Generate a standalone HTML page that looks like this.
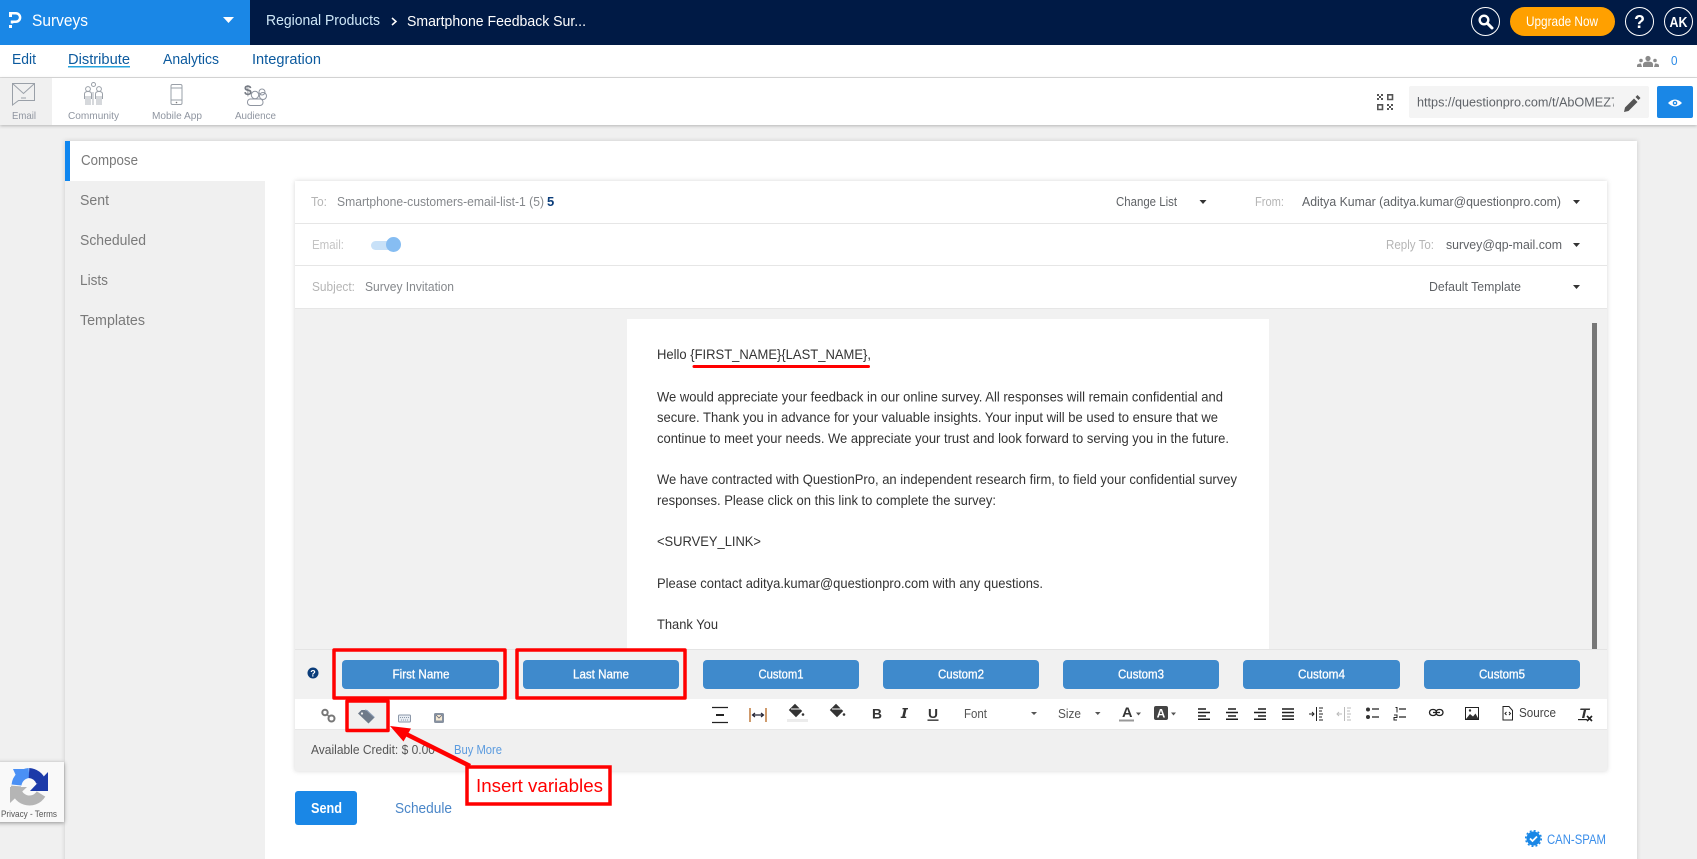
<!DOCTYPE html>
<html lang="en"><head><meta charset="utf-8"><title>Surveys - Distribute</title>
<style>
html,body{margin:0;padding:0;background:#f0f0f0;width:1697px;height:859px;overflow:hidden}
svg{display:block}
text{font-family:"Liberation Sans",Arial,sans-serif}
.w{fill:#fff}
.nav{font-size:15px;fill:#0c5a9e}
.lab{font-size:10.5px;fill:#8f95a0}
.side{font-size:14.5px;fill:#7a7a7a}
.g{font-size:13px;fill:#b5b5b5}
.d{font-size:13px;fill:#5f6266}
.l{font-size:13px;fill:#85888c}
.m{font-size:14px;fill:#333}
.b{font-size:13px;fill:#fff;stroke:#fff;stroke-width:.3px;text-anchor:middle}
</style></head><body>
<svg xmlns="http://www.w3.org/2000/svg" width="1697" height="859" viewBox="0 0 1697 859">
<defs>
<filter id="s1" x="-5%" y="-5%" width="110%" height="110%"><feDropShadow dx="0" dy="0" stdDeviation="2.5" flood-color="#000" flood-opacity=".16"/></filter>
<filter id="s2" x="-20%" y="-20%" width="140%" height="140%"><feDropShadow dx="0" dy="1" stdDeviation="2" flood-color="#000" flood-opacity=".4"/></filter>
<filter id="s3" x="-5%" y="-50%" width="110%" height="200%"><feDropShadow dx="0" dy="1" stdDeviation="1.5" flood-color="#000" flood-opacity=".25"/></filter>
</defs>
<rect width="1697" height="859" fill="#f0f0f0"/>

<!-- top bar -->
<rect width="1697" height="45" fill="#001a45"/>
<rect width="250" height="45" fill="#1a87e6"/>
<path d="M9 13.200h6.800a4.300 4.300 0 0 1 0 8.600h-3.800v1.700" fill="none" stroke="#fff" stroke-width="2.500"/>
<rect x="9" y="12" width="3" height="5" fill="#fff"/>
<rect x="9" y="25" width="3" height="3" fill="#fff"/>
<text x="32" y="26" font-size="17" class="w" textLength="56" lengthAdjust="spacingAndGlyphs">Surveys</text>
<path d="M223 17h11l-5.500 6z" fill="#fff"/>
<text x="266" y="25" font-size="15" fill="#cfe8f8" textLength="114" lengthAdjust="spacingAndGlyphs">Regional Products</text>
<path d="M392 18l4 3.500-4 3.500" fill="none" stroke="#fff" stroke-width="1.500"/>
<text x="407" y="26" font-size="15" class="w" textLength="179" lengthAdjust="spacingAndGlyphs">Smartphone Feedback Sur...</text>
<circle cx="1485.500" cy="21.500" r="14" fill="none" stroke="#fff" stroke-width="1"/>
<circle cx="1484" cy="20" r="4.300" fill="none" stroke="#fff" stroke-width="2.400"/>
<path d="M1487.500 23.500l4.500 4.500" stroke="#fff" stroke-width="3" stroke-linecap="round"/>
<rect x="1510" y="7" width="105" height="29" rx="14.500" fill="#ffa000"/>
<text x="1526" y="26" font-size="14" class="w" textLength="72" lengthAdjust="spacingAndGlyphs">Upgrade Now</text>
<circle cx="1639.500" cy="21.500" r="14" fill="none" stroke="#fff" stroke-width="1"/>
<text x="1639.500" y="28" font-size="18" font-weight="bold" class="w" text-anchor="middle">?</text>
<circle cx="1678.500" cy="21.500" r="14" fill="none" stroke="#fff" stroke-width="1"/>
<text x="1678.500" y="27" font-size="15" font-weight="bold" class="w" text-anchor="middle" textLength="18" lengthAdjust="spacingAndGlyphs">AK</text>

<!-- nav -->
<rect y="45" width="1697" height="32" fill="#fff"/>
<rect y="77" width="1697" height="1" fill="#dcdcdc"/>
<text x="12" y="64" class="nav" textLength="24" lengthAdjust="spacingAndGlyphs">Edit</text>
<text x="68" y="64" class="nav" textLength="62" lengthAdjust="spacingAndGlyphs">Distribute</text>
<rect x="68" y="66" width="62" height="1.500" fill="#27a3dd"/>
<text x="163" y="64" class="nav" textLength="56" lengthAdjust="spacingAndGlyphs">Analytics</text>
<text x="252" y="64" class="nav" textLength="69" lengthAdjust="spacingAndGlyphs">Integration</text>
<g fill="#8a8a8a"><circle cx="1648" cy="58.500" r="2.600"/><circle cx="1641" cy="60.500" r="1.800"/><circle cx="1655" cy="60.500" r="1.800"/><path d="M1643 67v-2.500q0-3 5-3t5 3v2.500z"/><path d="M1637 67v-1.500q0-2 4-2l1 3.500zM1659 67v-1.500q0-2-4-2l-1 3.500z"/></g>
<text x="1671" y="65" font-size="13" fill="#2a8ae6" textLength="6.500" lengthAdjust="spacingAndGlyphs">0</text>

<!-- subbar -->
<rect y="78" width="1697" height="47" fill="#fff" filter="url(#s3)"/>
<rect y="78" width="52" height="47" fill="#f0f0f0"/>
<path d="M12.500 83.500h22v17h-16l-6 4.500zM12.500 83.500l11 10 11-10" fill="none" stroke="#9aa0a8" stroke-width="1"/>
<path d="M21 98h5" stroke="#9aa0a8"/>
<text x="12" y="119" class="lab" textLength="24" lengthAdjust="spacingAndGlyphs">Email</text>
<g fill="none" stroke="#9aa0a8" stroke-width="1"><circle cx="93.500" cy="84.500" r="2"/><circle cx="88" cy="89" r="2.400"/><circle cx="99" cy="89" r="2.400"/><path d="M84.500 99v-5q0-2.500 3.500-2.500t3.500 2.500v5M95.500 99v-5q0-2.500 3.500-2.500t3.500 2.500v5"/><path d="M86 96v9M88 96v9M90 96v9M97 96v9M99 96v9M101 96v9M93 92v13" stroke-width=".8"/></g>
<text x="68" y="119" class="lab" textLength="51" lengthAdjust="spacingAndGlyphs">Community</text>
<rect x="171" y="84.500" width="11" height="20" rx="1.500" fill="none" stroke="#9aa0a8"/><path d="M171 88h11M171 100h11" stroke="#9aa0a8"/><circle cx="176.500" cy="102.500" r=".8" fill="#777"/>
<text x="152" y="119" class="lab" textLength="50" lengthAdjust="spacingAndGlyphs">Mobile App</text>
<text x="244" y="95" font-size="14" font-weight="bold" fill="#767b84">$</text>
<g fill="none" stroke="#8f95a0"><circle cx="255" cy="95" r="3.700"/><circle cx="262" cy="92" r="3"/><circle cx="263" cy="96" r="3.500"/><rect x="247.500" y="99" width="15.500" height="6.500" rx="3"/></g>
<text x="235" y="119" class="lab" textLength="41" lengthAdjust="spacingAndGlyphs">Audience</text>
<g fill="#555">
<path d="M1387.800 94.800h4.700v4.700h-4.700zM1377.800 104.800h4.700v4.700h-4.700z" fill="none" stroke="#555" stroke-width="1.600"/>
<path d="M1377 94h2v2h-2zM1381 94h2v2h-2zM1379 96h2v2h-2zM1377 98h2v2h-2zM1381 98h2v2h-2zM1387 104h2v2h-2zM1391 104h2v2h-2zM1389 106h2v2h-2zM1387 108h2v2h-2zM1391 108h2v2h-2z"/>
</g>
<rect x="1409" y="86" width="240" height="32" rx="2" fill="#f4f4f4"/>
<text x="1417" y="106.500" font-size="13" fill="#5f6368" textLength="201" lengthAdjust="spacingAndGlyphs">https://questionpro.com/t/AbOMEZ7</text>
<rect x="1614" y="90" width="10" height="24" fill="#f4f4f4"/>
<path d="M1625 107.500l9-9 3.500 3.500-9 9-4.500 1zM1635.500 97l2-2 3 3-2 2z" fill="#555"/>
<rect x="1657" y="86" width="36" height="32" rx="2" fill="#1a87e6"/>
<path d="M1668 103q7-7 14 0q-7 7-14 0z" fill="#fff"/><circle cx="1675" cy="103" r="2.300" fill="#1a87e6"/><circle cx="1675" cy="103" r="1" fill="#fff"/>

<!-- panel -->
<rect x="65" y="141" width="1572" height="730" fill="#fff" filter="url(#s1)"/>
<rect x="65" y="181" width="200" height="678" fill="#f0f0f0"/>
<rect x="65" y="141" width="5" height="40" fill="#0f86ef"/>
<text x="81" y="165" class="side" textLength="57" lengthAdjust="spacingAndGlyphs">Compose</text>
<text x="80" y="205" class="side" textLength="29" lengthAdjust="spacingAndGlyphs">Sent</text>
<text x="80" y="245" class="side" textLength="66" lengthAdjust="spacingAndGlyphs">Scheduled</text>
<text x="80" y="285" class="side" textLength="28" lengthAdjust="spacingAndGlyphs">Lists</text>
<text x="80" y="325" class="side" textLength="65" lengthAdjust="spacingAndGlyphs">Templates</text>

<!-- card -->
<rect x="295" y="181" width="1312" height="590" fill="#fff" filter="url(#s1)"/>
<rect x="295" y="223" width="1312" height="1" fill="#e6e6e6"/>
<rect x="295" y="265" width="1312" height="1" fill="#e6e6e6"/>
<rect x="295" y="308" width="1312" height="1" fill="#e6e6e6"/>
<text x="311" y="206" class="g" textLength="16" lengthAdjust="spacingAndGlyphs">To:</text>
<text x="337" y="206" class="l" textLength="207" lengthAdjust="spacingAndGlyphs">Smartphone-customers-email-list-1 (5)</text>
<text x="547" y="206" font-size="13" font-weight="bold" fill="#0b3d7a">5</text>
<text x="1116" y="206" class="d" textLength="61" lengthAdjust="spacingAndGlyphs">Change List</text>
<path d="M1199.500 200h7l-3.500 4z" fill="#333"/>
<text x="1255" y="206" class="g" textLength="29" lengthAdjust="spacingAndGlyphs">From:</text>
<text x="1302" y="206" class="d" textLength="259" lengthAdjust="spacingAndGlyphs">Aditya Kumar (aditya.kumar@questionpro.com)</text>
<path d="M1573 200h7l-3.500 4z" fill="#333"/>
<text x="312" y="249" class="g" style="fill:#c4c4c4" textLength="32" lengthAdjust="spacingAndGlyphs">Email:</text>
<rect x="371" y="241" width="26" height="9" rx="4.500" fill="#c8e1f8"/>
<circle cx="393.500" cy="244.500" r="7.500" fill="#86bdf2"/>
<text x="1386" y="249" class="g" textLength="48" lengthAdjust="spacingAndGlyphs">Reply To:</text>
<text x="1446" y="249" class="d" textLength="116" lengthAdjust="spacingAndGlyphs">survey@qp-mail.com</text>
<path d="M1573 243h7l-3.500 4z" fill="#333"/>
<text x="312" y="291" class="g" textLength="43" lengthAdjust="spacingAndGlyphs">Subject:</text>
<text x="365" y="291" class="l" textLength="89" lengthAdjust="spacingAndGlyphs">Survey Invitation</text>
<text x="1429" y="291" class="d" textLength="92" lengthAdjust="spacingAndGlyphs">Default Template</text>
<path d="M1573 285h7l-3.500 4z" fill="#333"/>

<!-- email -->
<rect x="295" y="309" width="1312" height="340" fill="#f1f1f1"/>
<rect x="627" y="319" width="642" height="330" fill="#fff"/>
<rect x="1592" y="323" width="5" height="326" fill="#777"/>
<text x="657" y="359" class="m" textLength="214" lengthAdjust="spacingAndGlyphs">Hello {FIRST_NAME}{LAST_NAME},</text>
<rect x="692.500" y="365" width="177.500" height="3" rx="1.500" fill="#f00"/>
<text x="657" y="401.500" class="m" textLength="566" lengthAdjust="spacingAndGlyphs">We would appreciate your feedback in our online survey. All responses will remain confidential and</text>
<text x="657" y="422" class="m" textLength="561" lengthAdjust="spacingAndGlyphs">secure. Thank you in advance for your valuable insights. Your input will be used to ensure that we</text>
<text x="657" y="443" class="m" textLength="572" lengthAdjust="spacingAndGlyphs">continue to meet your needs. We appreciate your trust and look forward to serving you in the future.</text>
<text x="657" y="484" class="m" textLength="580" lengthAdjust="spacingAndGlyphs">We have contracted with QuestionPro, an independent research firm, to field your confidential survey</text>
<text x="657" y="505" class="m" textLength="339" lengthAdjust="spacingAndGlyphs">responses. Please click on this link to complete the survey:</text>
<text x="657" y="546" class="m" textLength="104" lengthAdjust="spacingAndGlyphs">&lt;SURVEY_LINK&gt;</text>
<text x="657" y="588" class="m" textLength="386" lengthAdjust="spacingAndGlyphs">Please contact aditya.kumar@questionpro.com with any questions.</text>
<text x="657" y="629" class="m" textLength="61" lengthAdjust="spacingAndGlyphs">Thank You</text>

<!-- buttons row -->
<rect x="295" y="649" width="1312" height="50" fill="#f1f1f1"/>
<rect x="295" y="649" width="1312" height="1" fill="#e4e4e4"/>
<circle cx="313" cy="673" r="5.500" fill="#0b3d7a"/>
<text x="313" y="676.500" font-size="9" font-weight="bold" class="w" text-anchor="middle">?</text>
<g fill="#3f8acc">
<rect x="342" y="660" width="157" height="29" rx="4"/><rect x="523" y="660" width="156" height="29" rx="4"/>
<rect x="703" y="660" width="156" height="29" rx="4"/><rect x="883" y="660" width="156" height="29" rx="4"/>
<rect x="1063" y="660" width="156" height="29" rx="4"/><rect x="1243" y="660" width="157" height="29" rx="4"/>
<rect x="1424" y="660" width="156" height="29" rx="4"/></g>
<text x="421" y="678.500" class="b" textLength="57" lengthAdjust="spacingAndGlyphs">First Name</text>
<text x="601" y="678.500" class="b" textLength="56" lengthAdjust="spacingAndGlyphs">Last Name</text>
<text x="781" y="678.500" class="b" textLength="45" lengthAdjust="spacingAndGlyphs">Custom1</text>
<text x="961" y="678.500" class="b" textLength="46" lengthAdjust="spacingAndGlyphs">Custom2</text>
<text x="1141" y="678.500" class="b" textLength="46" lengthAdjust="spacingAndGlyphs">Custom3</text>
<text x="1321.500" y="678.500" class="b" textLength="47" lengthAdjust="spacingAndGlyphs">Custom4</text>
<text x="1502" y="678.500" class="b" textLength="46" lengthAdjust="spacingAndGlyphs">Custom5</text>

<!-- toolbar -->
<rect x="295" y="699" width="1312" height="30" fill="#fff"/>
<rect x="295" y="729" width="1312" height="1" fill="#e8e8e8"/>
<rect x="295" y="730" width="1312" height="41" fill="#f0f0f0"/>
<rect x="347" y="701" width="41" height="29.500" fill="#f0f0f0"/>
<g fill="none" stroke="#777" stroke-width="2"><circle cx="325" cy="712.500" r="2.700"/><circle cx="331.500" cy="718.500" r="3"/></g><path d="M327 714.500l2 2" stroke="#777" stroke-width="1.500"/>
<path d="M358 713.500l3.500-3.500h5.500l7.500 7.500-6 6z" fill="#6f7a8a"/><path d="M365 710l2 .5 7.500 7" fill="none" stroke="#8fa0b8" stroke-width="1"/><circle cx="362" cy="713.500" r="1.100" fill="#f0f0f0"/>
<rect x="398.500" y="715" width="12" height="7" rx="1" fill="#e8edf3" stroke="#8b97a8"/><path d="M400 717.500h9M401 720h7" stroke="#8b97a8" stroke-dasharray="1 1"/>
<rect x="434" y="713" width="10" height="10" rx="1.500" fill="#8791a0"/><rect x="436" y="715" width="6" height="5.500" fill="#f4e9d2"/><path d="M436 715l3 3 3-3" stroke="#667" fill="none" stroke-width=".8"/>
<path d="M712 707.500h16M712 722.500h16" stroke="#222" stroke-width="1.200"/>
<path d="M716 714h8v2h-8z" fill="#222"/>
<path d="M750 708v14M766 708v14" stroke="#b5651d" stroke-width="1.300"/><path d="M752.500 715h11M755 713l-2.500 2 2.500 2M761 713l2.500 2-2.500 2" stroke="#223" stroke-width="1.200" fill="none"/>
<path d="M795 704.500l6.500 6.500-5.500 5.500-6.500-6.500zM794 705v4" fill="#333" stroke="#333"/><path d="M791 709h10" stroke="#fff"/><circle cx="803" cy="714.500" r="1.300" fill="#333"/>
<rect x="787" y="719" width="21" height="3" fill="#ececec"/>
<path d="M836 704.500l6.500 6.500-5.500 5.500-6.500-6.500zM835 705v4" fill="#333" stroke="#333"/><path d="M832 709h10" stroke="#fff"/><circle cx="844" cy="714.500" r="1.300" fill="#333"/>
<text x="872" y="718.500" font-size="14" font-weight="bold" fill="#333" textLength="10" lengthAdjust="spacingAndGlyphs">B</text>
<path d="M902.500 708h5.500v1.400h-1.500l-1.700 7.200h1.400v1.400h-5.500v-1.400h1.500l1.700-7.200h-1.400z" fill="#333"/>
<text x="928" y="718" font-size="13" font-weight="bold" fill="#333" textLength="10" lengthAdjust="spacingAndGlyphs">U</text><rect x="927.500" y="719.500" width="11" height="1.300" fill="#222"/>
<text x="964" y="718" font-size="12.500" fill="#555" textLength="23" lengthAdjust="spacingAndGlyphs">Font</text>
<path d="M1031 712h6l-3 3zM1095 712h5.500l-2.700 3z" fill="#555"/>
<text x="1058" y="718" font-size="12.500" fill="#555" textLength="23" lengthAdjust="spacingAndGlyphs">Size</text>
<text x="1122" y="717" font-size="14" font-weight="bold" fill="#333" textLength="10.500" lengthAdjust="spacingAndGlyphs">A</text><rect x="1119" y="719.500" width="15" height="2" fill="#999"/>
<path d="M1136 712.500h5l-2.500 3zM1171 712.500h5l-2.500 3z" fill="#555"/>
<rect x="1154" y="706" width="14" height="14" rx="2" fill="#444"/>
<text x="1161" y="717.500" font-size="12" font-weight="bold" class="w" text-anchor="middle">A</text>
<g stroke="#1c1c1c" stroke-width="1.500" fill="none">
<path d="M1198 709h8M1198 712.500h12M1198 716h8M1198 719.300h12"/>
<path d="M1228 709h8M1226 712.500h12M1228 716h8M1226 719.300h12"/>
<path d="M1258 709h8M1254 712.500h12M1258 716h8M1254 719.300h12"/>
<path d="M1282 709h12M1282 712.500h12M1282 716h12M1282 719.300h12"/>
</g>
<g stroke="#222" stroke-width="1" fill="none">
<path d="M1316.500 707v14M1319 708h4M1319 711h3M1319 714h4M1319 717h3M1319 720h4M1309 714h5M1312 712l2 2-2 2"/>
<path d="M1344.500 707v14M1347 708h4M1347 711h3M1347 714h4M1347 717h3M1347 720h4M1337 714h5M1339 712l-2 2 2 2" stroke="#bbb"/>
<path d="M1372 709h7M1372 717h7M1399 709h7M1399 717h7" stroke-width="1.300"/>
<path d="M1395.500 707.500h1.500v5"/><path d="M1394 715h3v2.500h-3v2.500h3"/>
<rect x="1429.500" y="709.500" width="7" height="6" rx="3" stroke-width="1.300"/><rect x="1436" y="709.500" width="7" height="6" rx="3" stroke-width="1.300"/><path d="M1433 712.500h7" stroke-width="1.300"/>
<rect x="1465.500" y="707.500" width="13" height="12"/>
<path d="M1503 706.500h6l3.500 4v9.500h-9.500z"/>
</g>
<circle cx="1368" cy="709.500" r="2" fill="#333"/><circle cx="1368" cy="717" r="2" fill="#333"/>
<path d="M1466 719l4-5 3 2.500 2.500-3 3 5.500z" fill="#333"/><circle cx="1470" cy="710.500" r="1.200" fill="#333"/>
<path d="M1506.500 712l-1.500 1.500 1.500 1.500M1509 712l1.500 1.500-1.500 1.500" fill="none" stroke="#222"/>
<text x="1519" y="717" font-size="12.500" fill="#444" textLength="37" lengthAdjust="spacingAndGlyphs">Source</text>
<text x="1579" y="718" font-size="14" font-weight="bold" font-style="italic" fill="#333" textLength="10" lengthAdjust="spacingAndGlyphs">T</text>
<rect x="1578" y="719" width="9" height="1.200" fill="#222"/>
<path d="M1587 716l5 5M1592 716l-5 5" stroke="#222" stroke-width="1.600"/>
<text x="311" y="754" font-size="13" fill="#555" textLength="124" lengthAdjust="spacingAndGlyphs">Available Credit: $ 0.00</text>
<text x="454" y="754" font-size="13" fill="#5b9bdf" textLength="48" lengthAdjust="spacingAndGlyphs">Buy More</text>

<!-- red annotations -->
<g fill="none" stroke="#f00" stroke-width="3.500" stroke-linejoin="round">
<rect x="334" y="650" width="171" height="48"/>
<rect x="517" y="650" width="168" height="48"/>
<rect x="347" y="701" width="41" height="29.500"/>
</g>
<path d="M470 766L402 732" stroke="#f00" stroke-width="4.500"/>
<path d="M390 726l21 2.500-7.500 13z" fill="#f00"/>
<rect x="467" y="767" width="143" height="37" fill="#fff" stroke="#f00" stroke-width="3.500"/>
<text x="476" y="792" font-size="18.500" fill="#f00" textLength="127" lengthAdjust="spacingAndGlyphs">Insert variables</text>

<!-- actions -->
<rect x="295" y="791" width="62" height="34" rx="3" fill="#1a87e6"/>
<text x="326.500" y="813" font-size="14.500" font-weight="bold" class="w" text-anchor="middle" textLength="31" lengthAdjust="spacingAndGlyphs">Send</text>
<text x="395" y="813" font-size="14.500" fill="#4a86c8" textLength="57" lengthAdjust="spacingAndGlyphs">Schedule</text>
<circle cx="1533.500" cy="838.500" r="7" fill="#1a87e6"/>
<circle cx="1533.500" cy="838.500" r="7.800" fill="none" stroke="#1a87e6" stroke-width="1.500" stroke-dasharray="2 2.080"/>
<path d="M1530 838.500l2.500 2.500 4.500-4.500" fill="none" stroke="#fff" stroke-width="1.800"/>
<text x="1547" y="844" font-size="13.500" fill="#3a8eea" textLength="59" lengthAdjust="spacingAndGlyphs">CAN-SPAM</text>

<!-- recaptcha -->
<rect x="-4" y="762" width="68" height="60" fill="#f9f9f9" filter="url(#s2)"/>
<g fill="none" stroke-width="10">
<path d="M16.500 785A13.500 13.500 0 0 1 29 773" stroke="#4a90f5"/>
<path d="M29 773A13.500 13.500 0 0 1 41 782" stroke="#1c3aa9"/>
<path d="M16 786A13.500 13.500 0 0 0 41 794" stroke="#b5b5b5"/>
</g>
<path d="M48 772v19H30z" fill="#1c3aa9"/><path d="M13 769l12 0-8 9z" fill="#4a90f5"/><path d="M10 803v-16h17z" fill="#b5b5b5"/>
<text x="1" y="817" font-size="9.500" fill="#555" textLength="56" lengthAdjust="spacingAndGlyphs">Privacy - Terms</text>
</svg>
</body></html>
